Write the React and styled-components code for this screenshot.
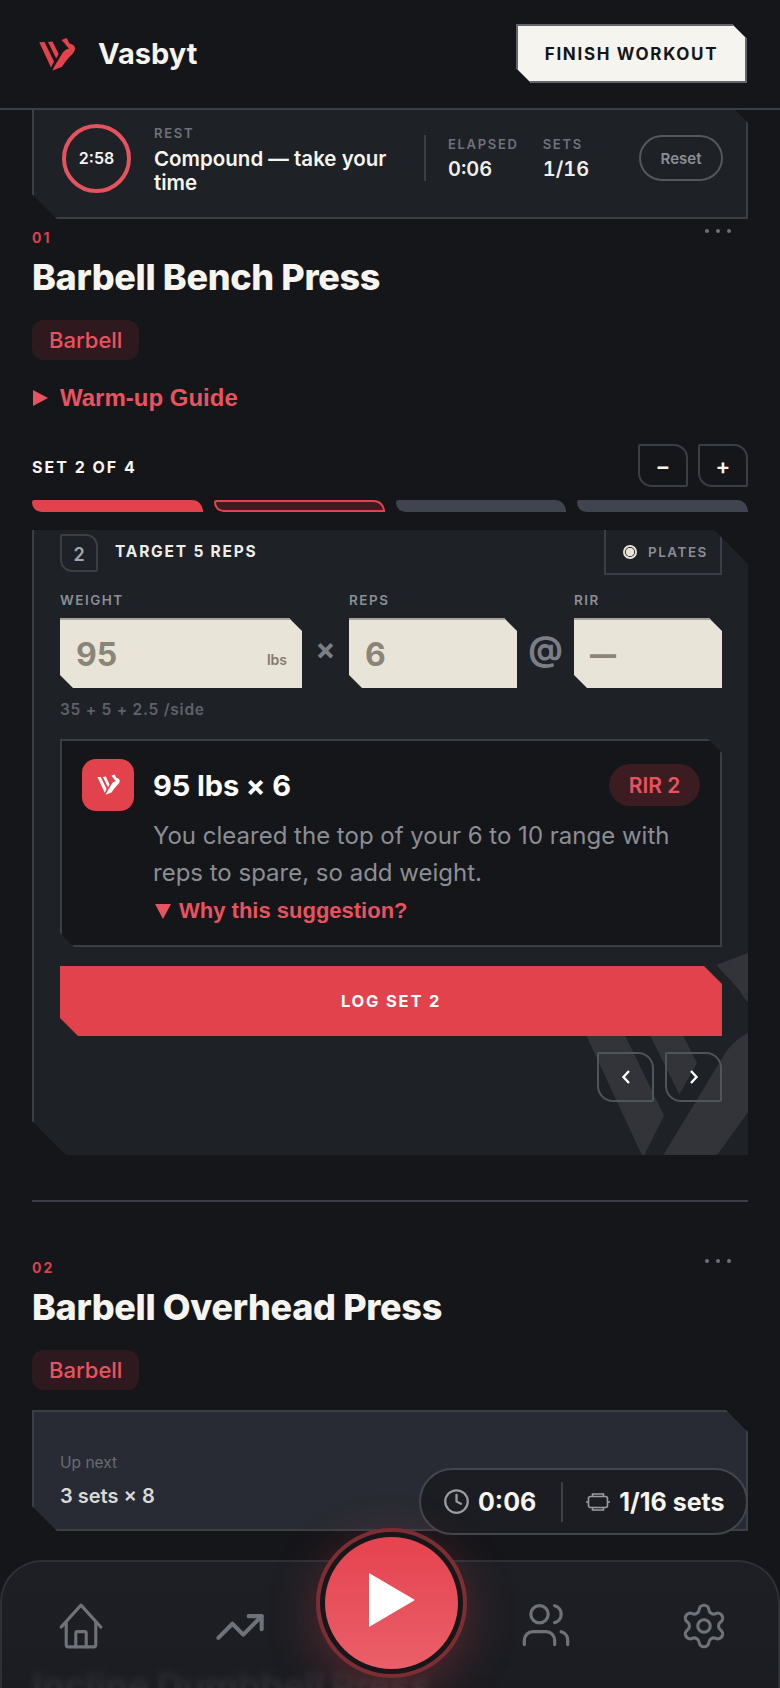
import React from "react";
import styled, { createGlobalStyle, css } from "styled-components";
import { Clock, TrendingUp, Users, Settings } from "lucide-react";

const INK = "#15161a";
const RED = "#e2424b";
const RED_TEXT = "#e8535f";
const LINE = "#3a3e46";
const CARD = "#1e2126";
const SANS = `Inter, "Liberation Sans", sans-serif`;
const ARIAL = `"Liberation Sans", Arial, sans-serif`;

const chamfer = (tr, bl) => css`
  clip-path: polygon(0 0, calc(100% - ${tr}px) 0, 100% ${tr}px, 100% 100%, ${bl}px 100%, 0 calc(100% - ${bl}px));
`;

const Global = createGlobalStyle`
  html, body { margin: 0; padding: 0; background: ${INK}; }
  * { box-sizing: border-box; }
  button { font-family: ${SANS}; }
`;

const Screen = styled.div`
  position: relative; width: 780px; height: 1688px; overflow: hidden;
  background: ${INK}; color: #f5f4ef; font-family: ${SANS};
`;
const Header = styled.header`
  height: 110px; display: flex; align-items: center; justify-content: space-between;
  padding: 0 33px 1px 37px; border-bottom: 2px solid ${LINE}; background: ${INK};
`;
const Brand = styled.div`
  display: flex; align-items: center; gap: 21px; font-size: 29px; font-weight: 700; color: #f5f4ef;
`;
const LogoMark = styled.svg`display: block; margin-top: 3px;`;
const FinishButton = styled.button`
  width: 231px; height: 59px; border: 2px solid #63656b; background: #f5f4ef; color: #15161a;
  font-size: 17px; font-weight: 700; letter-spacing: 1.65px; padding: 0; ${chamfer(15, 15)}
`;
const Main = styled.main`padding: 0 32px;`;

const RestCard = styled.section`
  height: 109px; display: flex; align-items: center; background: ${CARD}; padding: 0 23px 11px 28px;
  border: 2px solid ${LINE}; border-top: 0; ${chamfer(13, 25)}
`;
const Timer = styled.div`
  width: 69px; height: 69px; border-radius: 50%; border: 4px solid #e5535f; flex: none;
  display: flex; align-items: center; justify-content: center; font-size: 16px; font-weight: 600;
`;
const RestCopy = styled.div`width: 270px; margin: 4px 0 0 23px; padding-right: 20px;`;
const MicroLabel = styled.div`
  font-size: 13px; line-height: 16px; font-weight: 600; letter-spacing: 1.7px; color: #6f727a;
`;
const RestTitle = styled.div`
  font-size: 20.5px; line-height: 24px; font-weight: 600; color: #f5f4ef; margin-top: 6px;
`;
const Stats = styled.div`
  display: flex; gap: 24px; height: 46px; padding-left: 22px; border-left: 2px solid ${LINE};
  margin-right: auto; align-items: flex-start;
`;
const StatBlock = styled.div`padding-top: 1px;`;
const StatValue = styled.div`
  font-size: 20px; line-height: 26px; font-weight: 600; color: #f0efea; margin-top: 4px; font-variant-numeric: tabular-nums;
`;
const ResetButton = styled.button`
  width: 84px; height: 46px; border-radius: 23px; border: 2px solid #54575e; background: transparent;
  color: #8b8e94; font-size: 15px; font-weight: 600; padding: 0;
`;

const Exercise = styled.section`padding-top: ${p => p.$top}px;`;
const ExerciseTop = styled.div`display: flex; justify-content: space-between; padding-right: 17px;`;
const ExerciseNo = styled.div`font-size: 14px; line-height: 18px; font-weight: 700; letter-spacing: 2px; color: #d8424c;`;
const Dots = styled.div`
  display: flex; gap: 7px;
  i { width: 4px; height: 4px; border-radius: 50%; background: #6e7178; display: block; }
`;
const Title = styled.h2`
  margin: 8px 0 0; font-size: 36px; line-height: 44px; font-weight: 800; letter-spacing: -0.35px; color: #f5f4ef;
`;
const Tag = styled.div`
  display: inline-flex; align-items: center; height: 40px; padding: 0 17px; margin-top: 21px; border-radius: 12px;
  background: #2e1a1e; color: ${RED_TEXT}; font-size: 22px; font-weight: 500; vertical-align: top;
`;
const Guide = styled.div`
  display: flex; align-items: center; gap: 12px; margin-top: 23px; height: 30px;
  font-family: ${ARIAL}; font-size: 24px; font-weight: 700; color: ${RED_TEXT};
`;
const RightTriangle = styled.span`
  width: 0; height: 0; border-left: 15px solid ${RED_TEXT}; border-top: 8px solid transparent; border-bottom: 8px solid transparent;
  margin-left: 1px;
`;
const SetRow = styled.div`
  display: flex; align-items: center; justify-content: space-between; margin-top: 31px; height: 43px;
`;
const SetLabel = styled.div`font-size: 16px; font-weight: 700; letter-spacing: 2px; color: #f5f4ef; padding-top: 2px;`;
const StepGroup = styled.div`display: flex; gap: 10px;`;
const StepButton = styled.button`
  width: 50px; height: 43px; background: transparent; border: 2px solid ${LINE}; border-radius: 2px 14px 2px 14px;
  color: #f5f4ef; font-size: 22px; font-weight: 600; padding: 0;
`;
const Segments = styled.div`display: grid; grid-template-columns: repeat(4, 1fr); gap: 11px; margin-top: 13px;`;
const Segment = styled.div`
  height: 12px; border-radius: 3px 14px 0 12px;
  background: ${p => (p.$state === "done" ? RED : p.$state === "current" ? "#3a1c21" : "#3f444e")};
  border: ${p => (p.$state === "current" ? `2px solid ${RED}` : "0")};
`;

const SetCard = styled.section`
  position: relative; overflow: hidden; margin-top: 18px; height: 625px; background: ${CARD};
  border-left: 2px solid ${LINE}; padding: 0 26px; ${chamfer(34, 34)}
`;
const Watermark = styled.svg`
  position: absolute; left: 462px; top: 358px; width: 350px; height: 350px; fill: #fff; opacity: 0.085;
`;
const CardLayer = styled.div`position: relative;`;
const TargetRow = styled.div`display: flex; align-items: flex-start; justify-content: space-between; height: 45px;`;
const TargetLeft = styled.div`display: flex; align-items: center; gap: 17px; padding-top: 4px; height: 42px;`;
const SetBadge = styled.div`
  width: 38px; height: 38px; border: 2px solid ${LINE}; border-radius: 2px 12px 2px 12px; padding-top: 2px;
  display: flex; align-items: center; justify-content: center; color: #a3a6ad; font-size: 18px; font-weight: 600;
`;
const TargetText = styled.div`font-size: 15.5px; font-weight: 700; letter-spacing: 1.8px; color: #eeeee9; margin-top: -4px;`;
const PlatesButton = styled.button`
  width: 118px; height: 45px; display: flex; align-items: center; gap: 11px; padding: 0 0 0 17px;
  background: transparent; border: 2px solid ${LINE}; border-top: 0; color: #8b8e94;
  font-size: 13.5px; font-weight: 600; letter-spacing: 1.5px;
`;
const PlateDot = styled.span`
  width: 14px; height: 14px; border-radius: 50%; border: 2px solid #e9e4d8; background: radial-gradient(circle, #e9e4d8 0 4px, ${CARD} 4.5px);
`;
const Fields = styled.div`
  display: grid; grid-template-columns: 242px 47px 168px 57px 148px; margin-top: 17px; width: 662px;
`;
const FieldLabel = styled.div`
  grid-row: 1; grid-column: ${p => p.$col}; height: 16px; margin-bottom: 10px;
  font-size: 13.5px; line-height: 16px; font-weight: 600; letter-spacing: 1.5px; color: #8b8e94;
`;
const InputBox = styled.div`
  grid-row: 2; height: 70px; position: relative; display: flex; align-items: center; padding-left: 16px;
  background: #e9e4d8; border-top: 2px solid #a8a499; color: #8a8579; font-size: ${p => p.$size || 32}px; font-weight: ${p => p.$weight || 700};
  ${chamfer(13, 13)}
`;
const Unit = styled.span`position: absolute; right: 15px; bottom: 20px; font-size: 14px; font-weight: 600; color: #7f7b70;`;
const Sep = styled.div`
  grid-row: 2; text-align: center; align-self: center; color: #7b7e85; font-weight: 700; font-size: ${p => p.$size}px; line-height: 1;
  margin-top: -8px;
`;
const Hint = styled.div`
  margin-top: 12px; font-size: 15.5px; line-height: 20px; font-weight: 600; letter-spacing: 0.75px; color: #5f626a;
`;
const Suggestion = styled.div`
  margin-top: 19px; width: 662px; height: 208px; background: ${INK}; border: 2px solid ${LINE};
  padding: 18px 20px 0 20px; display: grid; grid-template-columns: 52px 1fr; grid-template-rows: 52px 1fr; column-gap: 19px; ${chamfer(14, 14)}
`;
const AiIcon = styled.div`
  width: 52px; height: 52px; border-radius: 14px; background: ${RED}; display: flex; align-items: center; justify-content: center;
`;
const SuggestHead = styled.div`display: flex; align-items: center; justify-content: space-between; height: 52px;`;
const SuggestTitle = styled.div`font-size: 29px; font-weight: 700; color: #fff; letter-spacing: -0.1px;`;
const RirPill = styled.div`
  width: 91px; height: 42px; border-radius: 21px; background: #3a1c21; color: ${RED_TEXT};
  display: flex; align-items: center; justify-content: center; font-size: 21px; font-weight: 600;
`;
const SuggestBody = styled.div`grid-column: 2;`;
const SuggestText = styled.p`
  margin: 6px 0 0; font-size: 24px; line-height: 37px; color: #8b8e94; font-weight: 400; letter-spacing: 0;
`;
const WhyLink = styled.div`
  display: flex; align-items: center; gap: 8px; height: 30px; margin-top: 5px; padding-left: 2px;
  font-family: ${ARIAL}; font-size: 22px; font-weight: 700; color: ${RED_TEXT};
`;
const DownTriangle = styled.span`
  width: 0; height: 0; border-top: 15px solid ${RED_TEXT}; border-left: 8px solid transparent; border-right: 8px solid transparent;
`;
const LogButton = styled.button`
  display: block; width: 662px; height: 70px; margin-top: 19px; border: 0; background: ${RED}; color: #fff;
  font-size: 16.5px; font-weight: 700; letter-spacing: 1.8px; padding: 0; ${chamfer(18, 18)}
`;
const Pager = styled.div`display: flex; justify-content: flex-end; gap: 11px; margin-top: 16px; width: 662px;`;
const PagerButton = styled.button`
  width: 57px; height: 50px; border: 2px solid #50545b; border-radius: 2px 16px 2px 16px; background: transparent;
  color: #fff; display: flex; align-items: center; justify-content: center; padding: 0;
`;
const Divider = styled.hr`margin: 45px 0 0; border: 0; height: 2px; background: ${LINE};`;
const UpNext = styled.div`
  margin-top: 20px; height: 121px; background: #282b33; border: 2px solid ${LINE}; padding: 41px 26px 0;
  ${chamfer(22, 25)}
`;
const UpLabel = styled.div`font-size: 15.5px; line-height: 20px; color: #686b73;`;
const UpValue = styled.div`font-size: 20px; line-height: 24px; font-weight: 600; color: #d9d9d6; margin-top: 11px;`;
const NextTitle = styled(Title)`margin-top: 132px;`;

const StatusPill = styled.div`
  position: absolute; left: 419px; top: 1468px; width: 329px; height: 67px; border-radius: 34px;
  background: #1b1d22; border: 2px solid #42464e; display: flex; align-items: center; padding-left: 22px;
  font-size: 25px; font-weight: 700; color: #f5f4ef; z-index: 3;
`;
const PillStat = styled.div`display: flex; align-items: center; gap: 8px;`;
const PillDivider = styled.span`width: 2px; height: 40px; background: #3d4048; margin: 0 22px 0 25px;`;

const BottomNav = styled.nav`
  position: absolute; left: 0; right: 0; bottom: 0; height: 128px; border-radius: 42px 42px 0 0; z-index: 4;
  border: 2px solid #2d3036; border-bottom: 0; backdrop-filter: blur(3px);
  background: linear-gradient(180deg, #1d1f24 0%, #1c1e23 60%, rgba(27, 29, 34, 0.93) 100%);
  display: grid; grid-template-columns: 160px 306px 159px 48px; padding: 39px 0 0 54px; align-content: start;
  color: #6e7279; svg { display: block; margin-left: -2px; }
`;
const PlayRing = styled.div`
  position: absolute; left: 316px; top: 1528px; width: 151px; height: 150px; border-radius: 50%; z-index: 5;
  border: 4px solid rgba(229, 67, 76, 0.5); background: #17171a; padding: 5px;
  box-shadow: 0 14px 50px rgba(229, 67, 76, 0.28);
`;
const PlayButton = styled.button`
  width: 100%; height: 100%; border-radius: 50%; border: 0; padding: 0 0 6px 0; display: flex; align-items: center; justify-content: center;
  background: linear-gradient(180deg, #e5434f 0%, #ea5f69 100%);
`;

const LOGO_PATHS = [
  "M9.3 13.3 L14.5 13 L24 32.5 L21 38.5 Z",
  "M18 13 L22.5 12.5 L28.7 25 L26.2 29.5 Z",
  "M22.5 41.5 L24 38 L32.5 24 C34 21.5 36 20.5 39 19.5 C37 17.5 35.5 16 34.8 14.6 L31.5 11 L36.7 9 L39.5 14.5 C42.5 15 45.5 17 45 20 C44.5 24 40 27 36 32 L31.7 38 Z",
];
const LogoShapes = () => LOGO_PATHS.map(d => <path key={d} d={d} />);

function ExerciseHead({ no, name }) {
  return (
    <>
      <ExerciseTop>
        <ExerciseNo>{no}</ExerciseNo>
        <Dots><i /><i /><i /></Dots>
      </ExerciseTop>
      <Title>{name}</Title>
      <Tag>Barbell</Tag>
    </>
  );
}

export default function App() {
  return (
    <Screen>
      <Global />
      <Header>
        <Brand>
          <LogoMark width="40" height="38" viewBox="7 7 40 38" fill="#e5434c"><LogoShapes /></LogoMark>
          Vasbyt
        </Brand>
        <FinishButton>FINISH WORKOUT</FinishButton>
      </Header>
      <Main>
        <RestCard>
          <Timer>2:58</Timer>
          <RestCopy>
            <MicroLabel>REST</MicroLabel>
            <RestTitle>Compound — take your time</RestTitle>
          </RestCopy>
          <Stats>
            <StatBlock><MicroLabel>ELAPSED</MicroLabel><StatValue>0:06</StatValue></StatBlock>
            <StatBlock><MicroLabel>SETS</MicroLabel><StatValue>1/16</StatValue></StatBlock>
          </Stats>
          <ResetButton>Reset</ResetButton>
        </RestCard>

        <Exercise $top={10}>
          <ExerciseHead no="01" name="Barbell Bench Press" />
          <Guide><RightTriangle />Warm-up Guide</Guide>
          <SetRow>
            <SetLabel>SET 2 OF 4</SetLabel>
            <StepGroup><StepButton>−</StepButton><StepButton>+</StepButton></StepGroup>
          </SetRow>
          <Segments>
            <Segment $state="done" />
            <Segment $state="current" />
            <Segment />
            <Segment />
          </Segments>
          <SetCard>
            <Watermark viewBox="0 0 50 50"><LogoShapes /></Watermark>
            <CardLayer>
              <TargetRow>
                <TargetLeft>
                  <SetBadge>2</SetBadge>
                  <TargetText>TARGET 5 REPS</TargetText>
                </TargetLeft>
                <PlatesButton><PlateDot />PLATES</PlatesButton>
              </TargetRow>
              <Fields>
                <FieldLabel $col={1}>WEIGHT</FieldLabel>
                <FieldLabel $col={3}>REPS</FieldLabel>
                <FieldLabel $col={5}>RIR</FieldLabel>
                <InputBox>95<Unit>lbs</Unit></InputBox>
                <Sep $size={30}>×</Sep>
                <InputBox>6</InputBox>
                <Sep $size={34}>@</Sep>
                <InputBox $size={26} $weight={900}>—</InputBox>
              </Fields>
              <Hint>35 + 5 + 2.5 /side</Hint>
              <Suggestion>
                <AiIcon>
                  <svg width="25" height="24" viewBox="7 7 40 38" fill="#fff"><LogoShapes /></svg>
                </AiIcon>
                <SuggestHead>
                  <SuggestTitle>95 lbs × 6</SuggestTitle>
                  <RirPill>RIR 2</RirPill>
                </SuggestHead>
                <SuggestBody>
                  <SuggestText>You cleared the top of your 6 to 10 range with reps to spare, so add weight.</SuggestText>
                  <WhyLink><DownTriangle />Why this suggestion?</WhyLink>
                </SuggestBody>
              </Suggestion>
              <LogButton>LOG SET 2</LogButton>
              <Pager>
                <PagerButton>
                  <svg width="12" height="16" viewBox="0 0 12 16" fill="none" stroke="#fff" strokeWidth="2.4"><path d="M9 2 L3.5 8 L9 14" /></svg>
                </PagerButton>
                <PagerButton>
                  <svg width="12" height="16" viewBox="0 0 12 16" fill="none" stroke="#fff" strokeWidth="2.4"><path d="M3 2 L8.5 8 L3 14" /></svg>
                </PagerButton>
              </Pager>
            </CardLayer>
          </SetCard>
          <Divider />
        </Exercise>

        <Exercise $top={57}>
          <ExerciseHead no="02" name="Barbell Overhead Press" />
          <UpNext>
            <UpLabel>Up next</UpLabel>
            <UpValue>3 sets × 8</UpValue>
          </UpNext>
          <NextTitle>Incline Dumbbell Press</NextTitle>
        </Exercise>
      </Main>

      <StatusPill>
        <PillStat><Clock size={27} color="#9a9ca1" strokeWidth={2} />0:06</PillStat>
        <PillDivider />
        <PillStat>
          <svg width="26" height="18" viewBox="0 0 26 18" fill="none" stroke="#9a9ca1" strokeWidth="1.6">
            <rect x="3.5" y="3.5" width="19" height="11" rx="2" />
            <path d="M7.5 3.5 V1 H18.5 V3.5 M7.5 14.5 V17 H18.5 V14.5 M1 9 H3.5 M22.5 9 H25" />
          </svg>
          1/16 sets
        </PillStat>
      </StatusPill>

      <BottomNav>
        <svg width="50" height="50" viewBox="0 0 24 24" fill="none" stroke="currentColor" strokeWidth="1.5" strokeLinecap="round" strokeLinejoin="round" style={{ marginLeft: 0 }}>
          <path d="M2.5 12.5 L12 2 L21.5 12.5" />
          <path d="M4.9 10 V21 A1 1 0 0 0 5.9 22 H18.1 A1 1 0 0 0 19.1 21 V10" />
          <path d="M9.5 22 V15.5 A.8 .8 0 0 1 10.3 14.7 H13.7 A.8 .8 0 0 1 14.5 15.5 V22" />
        </svg>
        <TrendingUp size={52} strokeWidth={1.9} />
        <Users size={52} strokeWidth={1.5} style={{ marginTop: -2 }} />
        <Settings size={50} strokeWidth={1.5} />
      </BottomNav>
      <PlayRing>
        <PlayButton>
          <svg width="48" height="56" viewBox="0 0 48 56" fill="#fff"><path d="M1 1 L47 28 L1 55 Z" /></svg>
        </PlayButton>
      </PlayRing>
    </Screen>
  );
}
